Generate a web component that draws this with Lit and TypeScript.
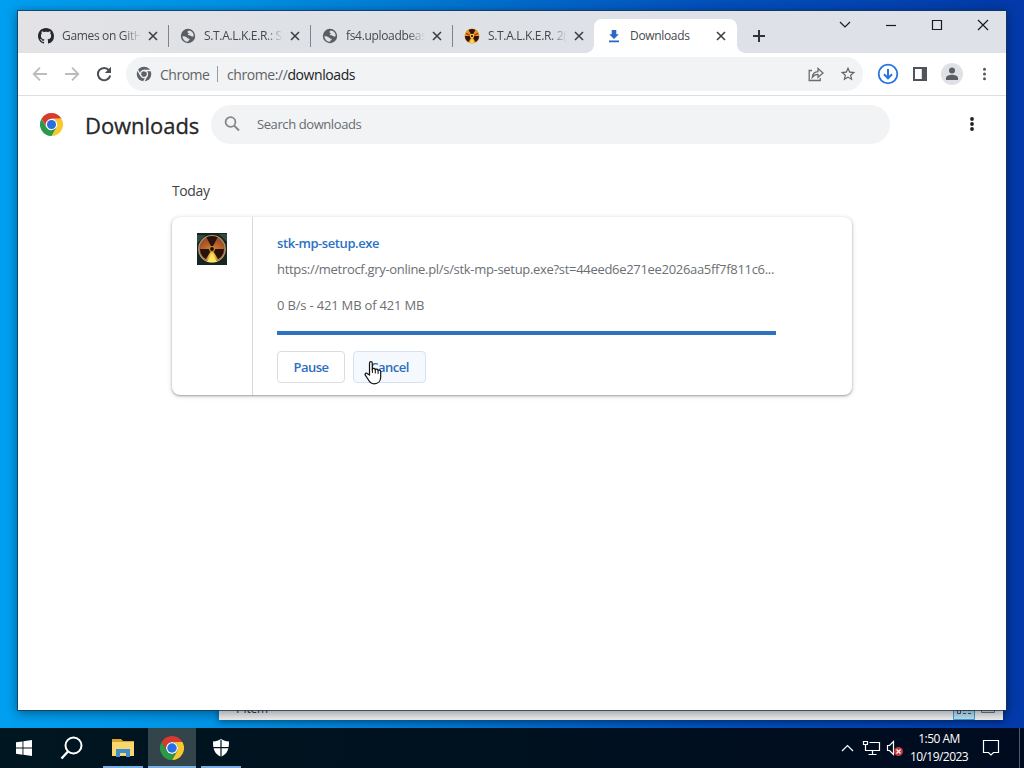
import {LitElement, html, css, svg} from 'lit';
import {customElement} from 'lit/decorators.js';

const chromeLogo = (s: number) => html`<svg width=${s} height=${s} viewBox="0 0 48 48">
  <circle cx="24" cy="24" r="12" fill="#fff"/>
  <path fill="#d93a2f" d="M24,12H44.7812a23.9939,23.9939,0,0,0-41.5639.0029L13.6079,30l.0093-.0024A11.9852,11.9852,0,0,1,24,12Z"/>
  <circle cx="24" cy="24" r="9.5" fill="#2a6fe0"/>
  <path fill="#f8c92e" d="M34.3913,30.0029,24.0007,48A23.994,23.994,0,0,0,44.78,12.0031H23.9989l-.0025.0093A11.985,11.985,0,0,1,34.3913,30.0029Z"/>
  <path fill="#2b9a48" d="M13.6086,30.0031,3.218,12.006A23.994,23.994,0,0,0,24.0025,48L34.3931,30.0029l-.0067-.0068a11.9852,11.9852,0,0,1-20.7778.007Z"/>
</svg>`;

const github = html`<svg width="16" height="16" viewBox="0 0 16 16"><path fill="#24292f" d="M8 0C3.58 0 0 3.58 0 8c0 3.54 2.29 6.53 5.47 7.59.4.07.55-.17.55-.38 0-.19-.01-.82-.01-1.49-2.01.37-2.53-.49-2.69-.94-.09-.23-.48-.94-.82-1.13-.28-.15-.68-.52-.01-.53.63-.01 1.08.58 1.23.82.72 1.21 1.87.87 2.33.66.07-.52.28-.87.51-1.07-1.78-.2-3.64-.89-3.64-3.95 0-.87.31-1.59.82-2.15-.08-.2-.36-1.02.08-2.12 0 0 .67-.21 2.2.82.64-.18 1.32-.27 2-.27s1.36.09 2 .27c1.53-1.04 2.2-.82 2.2-.82.44 1.1.16 1.92.08 2.12.51.56.82 1.27.82 2.15 0 3.07-1.87 3.75-3.65 3.95.29.25.54.73.54 1.48 0 1.07-.01 1.93-.01 2.2 0 .21.15.46.55.38A8.01 8.01 0 0 0 16 8c0-4.42-3.58-8-8-8z"/></svg>`;

const globe = html`<svg width="16" height="16" viewBox="0 0 16 16"><circle cx="8" cy="8" r="7.200" fill="#5a5e63"/>
<path fill="#dee1e6" d="M9.300 2.400c-1.200.4-2.100 1.100-1.900 1.900.2.700 1.300.4 1.300 1.200 0 .7-1.200.9-.7 1.600.6.700 2 .1 2.600.7.600.6 1.100.9 1.900.7.500-.1.900-.3 1.200-.6A5.700 5.700 0 0 0 9.300 2.400zM2.300 8.300c1.200-.2 3-.1 3.900.7.700.6 1.300 1.200 2 1.400.7.300 1.500.2 1.500.9 0 .8-1.200.9-1.700 2.400A5.700 5.700 0 0 1 2.300 8.300z"/></svg>`;

const blades = (fill: string) => svg`<g fill=${fill}>
  <path d="M8 8 4.500 1.900a7 7 0 0 1 7 0z"/><path d="M8 8h7a7 7 0 0 1-3.500 6.100z"/><path d="M8 8 4.500 14.100A7 7 0 0 1 1 8z"/></g>`;

const nuclear = html`<svg width="16" height="16" viewBox="0 0 16 16"><circle cx="8" cy="8" r="7.500" fill="#e39a2c"/>${blades('#32140c')}
  <path d="M8 10 5.800 14.800h4.400z" fill="#ffe24a"/><path d="M2 5.500 5.500 7M14 5.500 10.500 7" stroke="#b8401c" stroke-width="1.500"/><circle cx="8" cy="8" r="2.200" fill="#f7c33c"/><circle cx="8" cy="8" r="1.100" fill="#2a100a"/></svg>`;

const dlIcon = html`<svg width="16" height="16" viewBox="0 0 16 16"><path fill="#2b66c8" d="M5.700 2h4.600v4.200h2.500L8 11 3.200 6.200h2.500zM3 12.600h10v1.600H3z"/></svg>`;

const closeX = html`<svg width="16" height="16" viewBox="0 0 16 16"><path d="M4 4l8 8M12 4l-8 8" stroke="#3c4043" stroke-width="1.600" fill="none"/></svg>`;

@customElement('app-root')
export class AppRoot extends LitElement {
  static styles = css`
    :host { display: block; width: 1024px; height: 768px; overflow: hidden; font-family: "Open Sans", "Noto Sans", sans-serif; }
    * { box-sizing: border-box; }
    svg { display: block; flex: none; }
    .desktop { position: relative; width: 1024px; height: 768px; display: flex; flex-direction: column; justify-content: flex-end;
      background: linear-gradient(90deg, #009ff0 0, #0092e4 22%, #0078d2 42%, #0052be 68%, #0339a9 100%); }
    .explorer { position: absolute; left: 219px; top: 690px; width: 784px; height: 30px; background: #eeeeef; overflow: hidden; display: flex; align-items: flex-end;
      justify-content: space-between; padding: 0 4px 0 15px; font-size: 12px; color: #333; box-shadow: 0 2px 7px #0006; }
    .items { line-height: 17px; padding-bottom: 3px; letter-spacing: -.2px; }
    .views { display: flex; gap: 2px; }
    .win { position: absolute; left: 18px; top: 11px; width: 988px; height: 699px; background: #fff; box-shadow: 0 0 0 1px #17365ccc, 0 2px 10px 1px #0006; display: flex; flex-direction: column; }
    .strip { height: 42px; flex: none; background: linear-gradient(90deg, #e3e3e6, #dee1e6 30%, #dee2e8); display: flex; align-items: flex-end; padding-left: 8px; }
    .tab { width: 142px; height: 34px; display: flex; align-items: center; padding-left: 12px; font-size: 12px; letter-spacing: -.33px; color: #45494d; flex: none; }
    .tab .t { width: 79px; margin: 0 4px 0 8px; white-space: nowrap; line-height: 20px; -webkit-mask-image: linear-gradient(90deg, #000 78%, transparent); }
    .tab.sep { padding-left: 11px; border-left: 1px solid; border-image: linear-gradient(transparent 7px, #808389 7px, #808389 27px, transparent 27px) 1; }
    .tab.on { background: #fff; border-radius: 8px 8px 0 0; width: 143px; position: relative; }
    .tab.on::before, .tab.on::after { content: ""; position: absolute; bottom: 0; width: 8px; height: 8px; }
    .tab.on::before { left: -8px; background: radial-gradient(circle at 0 0, transparent 7.5px, #fff 8px); }
    .tab.on::after { right: -8px; background: radial-gradient(circle at 100% 0, transparent 7.500px, #fff 8px); }
    .tab.on .t { -webkit-mask-image: none; }
    .plus { margin: 0 0 9px 14px; }
    .ctl { margin-left: auto; align-self: flex-start; }
    .bar { height: 43px; flex: none; display: flex; align-items: center; padding: 0 12px 0 14px; border-bottom: 1px solid #dcdfe1; }
    .nav { display: flex; gap: 16px; width: 94px; }
    .omni { width: 737px; height: 34px; border-radius: 17px; background: #f1f3f4; display: flex; align-items: center; font-size: 14px; color: #5f6368; padding: 0 7px 0 10px; letter-spacing: -.42px; }
    .omni .c { margin-left: 8px; width: 57px; white-space: nowrap; letter-spacing: -.5px; }
    .omni i { width: 1px; height: 16px; background: #9a9da1; }
    .omni .u { margin-left: 9px; white-space: nowrap; }
    .omni b { color: #202124; font-weight: 400; }
    .omni .r { margin-left: auto; display: flex; gap: 16px; }
    .acts { display: flex; align-items: center; margin-left: 14px; }
    .panel { margin-left: 13px; }
    .av { margin: 0 12px; }
    .head { height: 56px; flex: none; display: flex; align-items: center; padding-left: 22px; }
    .head h1 { margin: 1px 0 0 22px; width: 126px; font-size: 22px; font-weight: 500; -webkit-text-stroke: .3px #26282b; color: #26282b; line-height: 30px; letter-spacing: -.05px; white-space: nowrap; }
    .search { width: 679px; height: 39px; border-radius: 20px; background: #f1f3f4; display: flex; align-items: center; padding-left: 12px; font-size: 13px; letter-spacing: -.41px; color: #686c70; }
    .search span { margin-left: 15px; }
    .more { margin-left: 72px; }
    .list { padding: 28px 0 0 154px; }
    .day { font-size: 14px; line-height: 22px; letter-spacing: -.4px; color: #3f4347; }
    .card { margin-top: 15px; width: 680px; height: 178px; border-radius: 8px; background: #fff; box-shadow: 0 1px 2px #3c404366, 0 1px 4px 1px #3c404326; display: flex; }
    .ic { width: 81px; border-right: 1px solid #d6d8da; padding: 16px 0 0 25px; }
    .body { padding: 16px 0 0 24px; width: 523px; font-size: 13px; color: #6c6f73; white-space: nowrap; }
    .name { color: #2a72c4; font-weight: 600; line-height: 20px; letter-spacing: -.42px; }
    .url, .stat { line-height: 20px; }
    .url { margin-top: 6px; letter-spacing: -.31px; } .stat { margin-top: 16px; letter-spacing: -.18px; }
    .prog { height: 4px; background: #2f73c0; margin-top: 16px; }
    .btns { display: flex; gap: 8px; margin-top: 16px; letter-spacing: -.5px; }
    .btn { height: 32px; border: 1px solid #dadce0; border-radius: 4px; color: #2c6fc0; font-weight: 600; line-height: 30px; width: 68px; text-align: center; }
    .btn.h { width: 73px; background: #f5f9fe; border-color: #d5e2f2; }
    .cursor { position: absolute; left: 364px; top: 360px; }
    .task { position: relative; height: 40px; display: flex; background: linear-gradient(90deg, #001620, #00111f 50%, #000b20); color: #fff; }
    .cell { width: 48px; height: 40px; display: flex; align-items: center; justify-content: center; }
    .run { width: 40px; border-bottom: 2px solid #76b0e4; padding-top: 2px; }
    .first { margin-left: 7px; }
    .cur { width: 48px; background: #34444b; margin: 0 5px; }
    .tray { margin-left: auto; display: flex; align-items: center; }
    .clock { width: 64px; text-align: center; font-size: 12px; line-height: 18px; letter-spacing: -.55px; white-space: nowrap; padding-bottom: 1px; }
    .note { margin-left: 11px; }
    .peek { width: 1px; height: 40px; background: #4e5a68; margin: 0 4px 0 19px; }
  `;

  tab(icon: unknown, text: string, cls = '') {
    return html`<div class="tab ${cls}">${icon}<div class="t">${text}</div>${closeX}</div>`;
  }

  render() {
    return html`<div class="desktop">
      <div class="explorer"><span class="items">1 item</span><div class="views">
        <svg width="22" height="20" viewBox="0 0 22 20"><path d="M.5.5h21v19H.5z" fill="#b9dff2" stroke="#3fa0cf"/><path d="M4.500 8.500h3v5h-3zM10 10.500h3m2 0h3m-8 3h3m2 0h3" stroke="#456" fill="none"/></svg>
        <svg width="22" height="20" viewBox="0 0 22 20"><path d="M4.500 3.500h13v9h-13z" stroke="#777" fill="#ddd"/></svg></div></div>

      <div class="win">
        <div class="strip">
          ${this.tab(github, 'Games on GitH')}
          ${this.tab(globe, 'S.T.A.L.K.E.R.: S', 'sep')}
          ${this.tab(globe, 'fs4.uploadbeas', 'sep')}
          ${this.tab(nuclear, 'S.T.A.L.K.E.R. 2(', 'sep')}
          ${this.tab(dlIcon, 'Downloads', 'on')}
          <svg class="plus" width="16" height="16" viewBox="0 0 16 16"><path d="M8 2v12M2 8h12" stroke="#303236" stroke-width="2"/></svg>
          <svg class="ctl" width="184" height="30" viewBox="0 0 184 30" fill="none" stroke="#1a1a1a" stroke-width="1.200"><path d="M18 11l5 5 5-5"/><path d="M64 14.500h10"/><path d="M110.500 9.500h9v9h-9z"/><path d="M156 9l10 10M166 9l-10 10"/></svg>
        </div>
        <div class="bar">
          <div class="nav">
            <svg width="16" height="16" viewBox="0 0 16 16" fill="none" stroke="#babcbe" stroke-width="1.800"><path d="M15 8H2M8 1.700 1.700 8 8 14.300"/></svg>
            <svg width="16" height="16" viewBox="0 0 16 16" fill="none" stroke="#babcbe" stroke-width="1.800"><path d="M1 8h13M8 1.700 14.300 8 8 14.300"/></svg>
            <svg width="16" height="16" viewBox="0 0 16 16"><path d="M13 4.200A6.200 6.200 0 1 0 14.200 9.500" fill="none" stroke="#4b4e52" stroke-width="2"/><path d="M15 .8v6.200H8.800z" fill="#4b4e52"/></svg>
          </div>
          <div class="omni">
            <svg width="16" height="16" viewBox="0 0 48 48"><circle cx="24" cy="24" r="22" fill="#5f6368"/><circle cx="24" cy="24" r="10.500" fill="none" stroke="#f1f3f4" stroke-width="4"/><path d="M24 13.500h21M14.900 29.200 4 11M33.100 29.200 23 47" stroke="#f1f3f4" stroke-width="4"/></svg>
            <span class="c">Chrome</span><i></i><span class="u">chrome://<b>downloads</b></span>
            <div class="r">
              <svg width="16" height="16" viewBox="0 0 16 16" fill="none" stroke="#6a6d71" stroke-width="1.300"><path d="M4 4.500H1.200v10h11V12"/><path d="M4.300 11.300c.3-3.600 2.400-5.400 5.700-5.600V2.500L15 7l-5 4.300V8.400c-2.500 0-4.200.8-5.700 2.900z"/></svg>
              <svg width="16" height="16" viewBox="1 1 22 22"><path fill="#5f6368" d="M22 9.240l-7.190-.62L12 2 9.190 8.630 2 9.240l5.460 4.730L5.820 21 12 17.270 18.180 21l-1.630-7.030L22 9.240zM12 15.400l-3.760 2.270 1-4.280-3.320-2.880 4.380-.38L12 6.100l1.710 4.040 4.380.38-3.320 2.880 1 4.280L12 15.400z"/></svg>
            </div>
          </div>
          <div class="acts">
            <svg width="22" height="22" viewBox="0 0 22 22" fill="none" stroke="#2674dc" stroke-width="2"><circle cx="11" cy="11" r="9.300" stroke-width="1.800"/><path d="M11 6v9M7 11.300l4 4 4-4"/></svg>
            <svg class="panel" width="16" height="16" viewBox="0 0 16 16"><path fill="#505357" d="M1 1h14v14H1z"/><path fill="#fff" d="M3 3h6.800v10H3z"/></svg>
            <svg class="av" width="24" height="24" viewBox="0 0 24 24"><circle cx="12" cy="12" r="11" fill="#dfe1e6"/><circle cx="12" cy="8.500" r="3" fill="#5b5f64"/><path fill="#5b5f64" d="M6 18v-2c0-2.300 3.800-3.200 6-3.200s6 .9 6 3.200v2z"/></svg>
            <svg width="16" height="16" viewBox="0 0 16 16" fill="#55585c"><circle cx="8.500" cy="3.200" r="1.500"/><circle cx="8.500" cy="8" r="1.500"/><circle cx="8.500" cy="12.800" r="1.500"/></svg>
          </div>
        </div>
        <div class="head">
          ${chromeLogo(23)}<h1>Downloads</h1>
          <div class="search"><svg width="19" height="19" viewBox="0 0 19 19" fill="none" stroke="#85888b"><circle cx="7.500" cy="7" r="4.900" stroke-width="1.800"/><path d="M11 10.500l5 5" stroke-width="2"/></svg><span>Search downloads</span></div>
          <svg class="more" width="20" height="20" viewBox="0 0 20 20" fill="#222"><circle cx="10" cy="5" r="1.900"/><circle cx="10" cy="10" r="1.900"/><circle cx="10" cy="15" r="1.900"/></svg>
        </div>
        <div class="list">
          <div class="day">Today</div>
          <div class="card">
            <div class="ic"><svg width="30" height="32" viewBox="0 0 30 32">
              <defs><radialGradient id="g" cx=".5" cy=".75" r=".6"><stop offset="0" stop-color="#ffdc45"/><stop offset=".5" stop-color="#c9762a"/><stop offset="1" stop-color="#a2502a"/></radialGradient></defs>
              <path fill="#172420" d="M0 0h30v32H0z"/><path fill="#304a42" d="M0 2h8l-4 5-4 3zM22 1h8v8z"/>
              <circle cx="15" cy="16" r="13.300" fill="url(#g)" stroke="#a79a72" stroke-width="1.200"/>
              <g fill="#28130c"><path d="M15 15 9.300 4.300a13 13 0 0 1 11.400 0z"/><path d="M15 16h12a12 12 0 0 1-6 10.300z"/><path d="M15 16 9 26.300A12 12 0 0 1 3 16z"/></g>
              <path fill="#ffe766" d="M15 20l-5 9h10z"/><circle cx="15" cy="16" r="3" fill="#c88a33"/><circle cx="15" cy="16" r="1.900" fill="#1d0e08"/></svg></div>
            <div class="body">
              <div class="name">stk-mp-setup.exe</div>
              <div class="url">https://metrocf.gry-online.pl/s/stk-mp-setup.exe?st=44eed6e271ee2026aa5ff7f811c6...</div>
              <div class="stat">0 B/s - 421 MB of 421 MB</div>
              <div class="prog"></div>
              <div class="btns"><div class="btn">Pause</div><div class="btn h">Cancel</div></div>
            </div>
          </div>
        </div>
      </div>

      <div class="task">
        <div class="cell"><svg width="16" height="16" viewBox="0 0 16 16" fill="#fff"><path d="M0 2.300 6.500 1.400v6.200H0zM7.400 1.300 16 0v7.600H7.400zM0 8.400h6.500v6.300L0 13.800zM7.400 8.400H16V16l-8.600-1.200z"/></svg></div>
        <div class="cell"><svg width="24" height="24" viewBox="0 0 24 24" fill="none" stroke="#fff" stroke-width="2"><circle cx="13.500" cy="9.500" r="8"/><path d="M8 15.500 1.500 22.500" stroke-width="2.400"/></svg></div>
        <div class="cell run first"><svg width="22" height="20" viewBox="0 0 22 20"><path fill="#d9a32e" d="M0 1h9l2 2h11v4H0z"/><path fill="#f9d76c" d="M0 4h22v14H0z"/><path fill="#3b8fd0" d="M4 11h14v8h-4v-4H8v4H4z"/></svg></div>
        <div class="cell run cur">${chromeLogo(24)}</div>
        <div class="cell run"><svg width="18" height="18" viewBox="0 0 18 18"><path fill="#fff" d="M9 0c2.500 1.800 5 2.300 8 2.400 0 7-1 12-8 15.400C2 14.400 1 9.400 1 2.400 4 2.300 6.500 1.800 9 0z"/><path d="M9 1v17M1 8.700h16" stroke="#001521" stroke-width="1.200"/></svg></div>
        <div class="tray">
          <svg width="68" height="24" viewBox="0 0 68 24" fill="none" stroke="#fff" stroke-width="1.200"><path d="M3 15l5.500-5.500L14 15"/><path d="M30.500 6.500H40.500v8h-14v-4M33.500 14.500v4M29.500 18.500h8M24.500 5.500h4v3h-4zM26.500 8.500v6"/><path d="M48.500 9.500h2l4-4v13l-4-4h-2z"/><circle cx="59.500" cy="15.500" r="4.500" fill="#c8373e" stroke="none"/><path d="M57.500 13.500l4 4m0-4-4 4"/></svg>
          <div class="clock">1:50 AM<br>10/19/2023</div>
          <svg class="note" width="18" height="18" viewBox="0 0 18 18" fill="none" stroke="#fff" stroke-width="1.200"><path d="M1.500 1.500h15v12h-5L9 16l-2.500-2.500h-5z"/></svg>
          <div class="peek"></div>
        </div>
      </div>
      <svg class="cursor" width="18" height="25" viewBox="0 0 18 25"><path d="M5.500 15V3.200c0-2.200 2.800-2.200 2.800 0V9c.8-1 2.700-.7 2.900.6.9-.9 2.600-.5 2.800.8 1-.7 2.700-.1 2.700 1.200V17c0 4-2.500 6.800-6.500 6.800-3.300 0-4.700-1.800-6-4.300L1.300 15.200c-.8-1.700 1-2.700 2.200-1.500z" fill="#fff" stroke="#111" stroke-width="1.200"/><path d="M8.400 9v4M11.300 10v3.500M14.100 11v3" stroke="#111"/></svg>
    </div>`;
  }
}
